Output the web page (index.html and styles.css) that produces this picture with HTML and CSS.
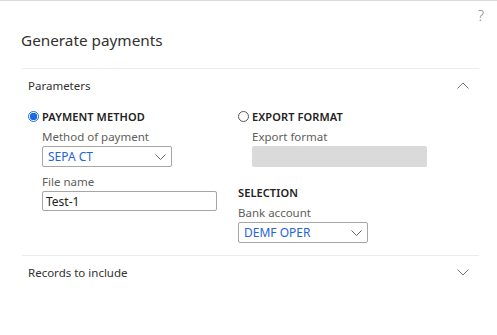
FILE: index.html
```html
<!DOCTYPE html>
<html lang="en">
<head>
    <meta charset="UTF-8">
    <title>Generate payments</title>
    <link rel="stylesheet" href="styles.css">
</head>
<body>
    <div class="dialog">
        <div class="help">?</div>
        <h1 class="title">Generate payments</h1>

        <section class="group">
            <div class="group-head">
                <span>Parameters</span>
                <svg class="chev" width="12" height="7" viewBox="0 0 12 7"><path d="M0.5 6.5 L6 1 L11.5 6.5" fill="none" stroke="#777" stroke-width="1"/></svg>
            </div>
            <div class="params">
                <div class="col">
                    <label class="radio-row">
                        <span class="radio checked"></span>
                        <span class="caps">PAYMENT METHOD</span>
                    </label>
                    <div class="field">
                        <div class="label">Method of payment</div>
                        <div class="select short">
                            <span>SEPA CT</span>
                            <svg width="11" height="6" viewBox="0 0 11 6"><path d="M0.5 0.5 L5.5 5.5 L10.5 0.5" fill="none" stroke="#666" stroke-width="1"/></svg>
                        </div>
                    </div>
                    <div class="field">
                        <div class="label">File name</div>
                        <div class="input">Test-1</div>
                    </div>
                </div>
                <div class="col">
                    <label class="radio-row">
                        <span class="radio"></span>
                        <span class="caps">EXPORT FORMAT</span>
                    </label>
                    <div class="field">
                        <div class="label">Export format</div>
                        <div class="disabled"></div>
                    </div>
                    <div class="caps heading">SELECTION</div>
                    <div class="field flush">
                        <div class="label">Bank account</div>
                        <div class="select short">
                            <span>DEMF OPER</span>
                            <svg width="11" height="6" viewBox="0 0 11 6"><path d="M0.5 0.5 L5.5 5.5 L10.5 0.5" fill="none" stroke="#666" stroke-width="1"/></svg>
                        </div>
                    </div>
                </div>
            </div>
        </section>

        <section class="group">
            <div class="group-head">
                <span>Records to include</span>
                <svg class="chev" width="12" height="7" viewBox="0 0 12 7"><path d="M0.5 0.5 L6 6 L11.5 0.5" fill="none" stroke="#777" stroke-width="1"/></svg>
            </div>
        </section>
    </div>
</body>
</html>
```

FILE: styles.css
```css
*{
    margin: 0;
    padding: 0;
    box-sizing: border-box;
}
body{
    font-family: "Noto Sans", "Open Sans", sans-serif;
    color: #333;
    background: #fff;
    border-top: 1px solid #d9d9d9;
}
.dialog{
    padding: 0 18px 0 22px;
}
.help{
    text-align: right;
    font-size: 15px;
    font-weight: 300;
    color: #888;
    line-height: 16px;
    padding-top: 6px;
    margin-right: -5px;
}
.title{
    font-size: 15.3px;
    font-weight: 400;
    color: #323130;
    line-height: 22px;
    margin-top: 6px;
    margin-left: -1px;
    height: 39px;
}
.group{
    border-top: 1px solid #ececec;
}
.group-head{
    display: flex;
    justify-content: space-between;
    align-items: center;
    height: 33px;
    padding: 0 10px 0 6px;
    font-size: 11.5px;
    color: #323130;
}
.params{
    display: grid;
    grid-template-columns: 210px 1fr;
    padding: 6px 0 12px 6px;
}
.radio-row{
    display: flex;
    align-items: center;
    gap: 3px;
    height: 16px;
}
.radio{
    width: 11px;
    height: 11px;
    border: 1px solid #555;
    border-radius: 50%;
    background: #fff;
}
.radio.checked{
    border-color: #1a6de0;
    background: radial-gradient(circle, #1a6de0 0 3.5px, #fff 4px);
}
.caps{
    font-size: 11px;
    font-weight: 600;
    color: #222;
    letter-spacing: 0.1px;
}
.heading{
    margin: 18px 0 0;
    line-height: 16px;
}
.field{
    padding-left: 14px;
    margin-top: 5px;
}
.field.flush{
    padding-left: 0;
    margin-top: 4px;
}
.label{
    font-size: 11.5px;
    color: #605e5c;
    line-height: 16px;
    margin-bottom: 1px;
}
.select, .input{
    height: 21px;
    border: 1px solid #a6a6a6;
    border-radius: 2px;
    display: flex;
    align-items: center;
    justify-content: space-between;
    padding: 0 5px 0 5px;
    font-size: 12px;
}
.select{
    color: #2563d9;
}
.short{
    width: 130px;
}
.input{
    width: 175px;
    height: 20px;
    padding-left: 3px;
    color: #222;
}
.disabled{
    width: 175px;
    height: 21px;
    background: #dadada;
    border-radius: 2px;
}
.field + .field{
    margin-top: 7px;
}
```
